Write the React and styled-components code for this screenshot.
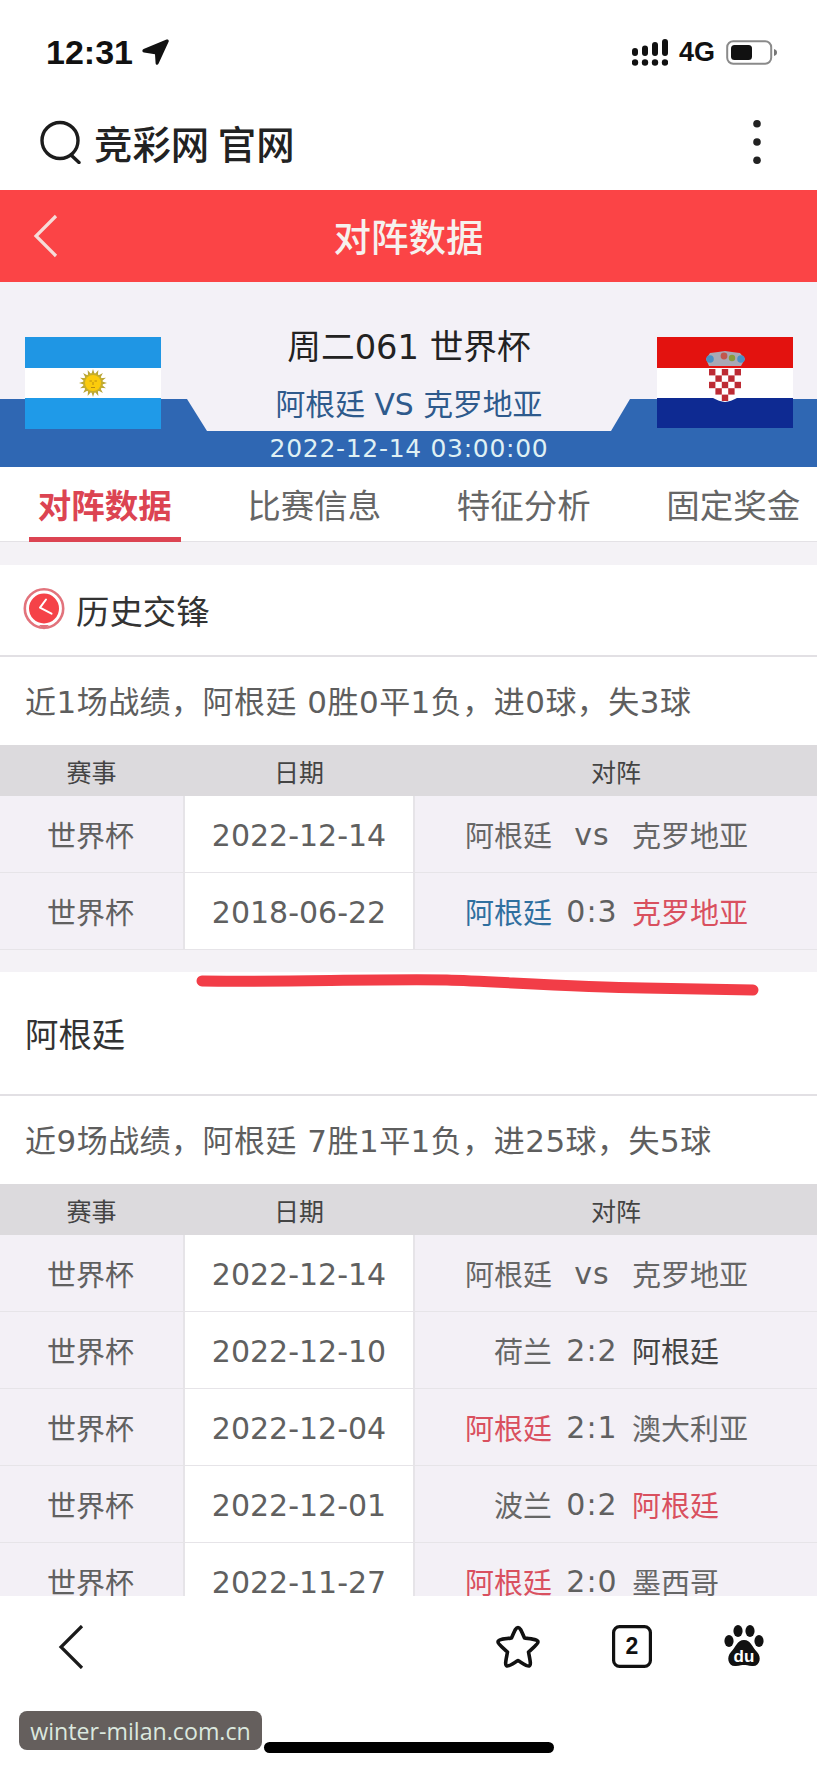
import React from 'react';
import styled, { createGlobalStyle } from 'styled-components';

const GlobalStyle = createGlobalStyle`
  html, body {
    margin: 0;
    padding: 0;
    background: #fff;
  }
  body {
    font-family: "DejaVu Sans", "Noto Sans CJK SC", sans-serif;
  }
`;

const Page = styled.div`
  position: relative;
  width: 817px;
  height: 1768px;
  overflow: hidden;
  display: flex;
  flex-direction: column;
  background: #f4f2f6;
`;

const StatusBar = styled.div`
  height: 104px;
  flex: none;
  box-sizing: border-box;
  padding: 0 39px 0 46px;
  background: #fff;
  display: flex;
  align-items: center;
  justify-content: space-between;
`;

const StatusLeft = styled.div`
  display: flex;
  align-items: center;
  gap: 9px;
`;

const Clock = styled.span`
  font-family: "Liberation Sans", sans-serif;
  font-weight: 700;
  font-size: 34px;
  color: #111;
`;

const StatusRight = styled.div`
  display: flex;
  align-items: center;
  gap: 11px;
`;

const Network = styled.span`
  font-family: "Liberation Sans", sans-serif;
  font-weight: 700;
  font-size: 27px;
  color: #111;
`;

const SearchBar = styled.div`
  height: 86px;
  flex: none;
  box-sizing: border-box;
  padding: 0 56px 11px 40px;
  background: #fff;
  display: flex;
  align-items: center;
  gap: 12px;
`;

const SearchText = styled.div`
  flex: 1;
  font-family: "Noto Sans CJK SC", sans-serif;
  font-size: 38.4px;
  font-weight: 500;
  color: #222;
`;

const TitleBar = styled.div`
  position: relative;
  height: 92px;
  flex: none;
  box-sizing: border-box;
  padding-bottom: 3px;
  background: #fb4446;
  display: flex;
  align-items: center;
  justify-content: center;
  font-family: "Noto Sans CJK SC", sans-serif;
  font-size: 37.5px;
  font-weight: 500;
  color: #f6f1ee;
`;

const TitleBack = styled.div`
  position: absolute;
  left: 32px;
  top: 24px;
  line-height: 0;
`;

const MatchHeader = styled.div`
  position: relative;
  height: 185px;
  flex: none;
  box-sizing: border-box;
  padding: 55px 24px 0 25px;
  background: #f3f1f7;
  display: flex;
  justify-content: space-between;
  align-items: flex-start;

  &::before {
    content: '';
    position: absolute;
    inset: 0;
    background: #2f67b3;
    clip-path: polygon(0 117px, 187px 117px, 207px 149px, 611px 149px, 630px 117px, 817px 117px, 817px 185px, 0 185px);
  }
`;

const Flag = styled.svg`
  position: relative;
  display: block;
  flex: none;
`;

const MatchInfo = styled.div`
  position: relative;
  display: flex;
  flex-direction: column;
  align-items: center;
  margin-top: -11px;
`;

const MatchRound = styled.div`
  font-size: 33.7px;
  line-height: 44px;
  color: #222;
  white-space: nowrap;
`;

const MatchTeams = styled.div`
  margin-top: 15px;
  font-size: 29.8px;
  line-height: 40px;
  color: #2e5a8c;
  white-space: nowrap;
`;

const MatchTime = styled.div`
  margin-top: 7px;
  font-size: 25px;
  line-height: 34px;
  letter-spacing: 0.7px;
  color: #dff0f4;
  white-space: nowrap;
`;

const Tabs = styled.div`
  height: 75px;
  flex: none;
  display: flex;
  background: #fff;
  border-bottom: 1px solid #e4e2e6;
  box-sizing: border-box;
`;

const Tab = styled.div`
  position: relative;
  flex: 0 0 209.5px;
  display: flex;
  justify-content: center;
  align-items: center;
  padding-bottom: 2px;
  box-sizing: border-box;
  font-family: "Noto Sans CJK SC", sans-serif;
  font-size: 33.5px;
  font-weight: ${(p) => (p.$active ? 700 : 400)};
  color: ${(p) => (p.$active ? '#dc4452' : '#666')};

  &::after {
    content: '';
    display: ${(p) => (p.$active ? 'block' : 'none')};
    position: absolute;
    left: 29px;
    right: 29px;
    bottom: -1px;
    height: 5px;
    background: #dc4452;
  }
`;

const Section = styled.div`
  flex: none;
  margin-top: ${(p) => p.$gap}px;
  background: #fff;
`;

const SectionTitle = styled.div`
  height: ${(p) => p.$height}px;
  box-sizing: border-box;
  padding-left: ${(p) => (p.$icon ? 23 : 25)}px;
  padding-bottom: 2px;
  display: flex;
  align-items: center;
  gap: 11px;
  font-family: "Noto Sans CJK SC", sans-serif;
  font-size: 33.4px;
  color: #333;
  border-bottom: 2px solid #e2e0e4;
`;

const Summary = styled.div`
  height: ${(p) => p.$height}px;
  box-sizing: border-box;
  padding: 0 0 3px 25px;
  display: flex;
  align-items: center;
  font-size: 31px;
  letter-spacing: 0.47px;
  color: #5e5e5e;
  white-space: nowrap;
`;

const TableHead = styled.div`
  height: 51px;
  display: grid;
  grid-template-columns: 183px 232px 1fr;
  align-items: center;
  background: #dcdadd;
  font-family: "Noto Sans CJK SC", sans-serif;
  font-size: 25px;
  color: #444;
  text-align: center;
`;

const Row = styled.div`
  height: 77px;
  display: grid;
  grid-template-columns: 183px 232px 1fr;
  background: #f3f0f6;
  color: #606060;
  font-size: 29px;
`;

const CellEvent = styled.div`
  display: flex;
  align-items: center;
  justify-content: center;
  padding-right: 2px;
  font-family: "Noto Sans CJK SC", sans-serif;
  border-bottom: 1px solid #e6e4e8;
`;

const CellDate = styled.div`
  display: flex;
  align-items: center;
  justify-content: center;
  padding-top: 2px;
  background: #fff;
  border-left: 2px solid #e6e4e8;
  border-right: 2px solid #e6e4e8;
  border-bottom: 1px solid #e6e4e8;
  font-size: 30px;
`;

const CellMatch = styled.div`
  display: grid;
  grid-template-columns: 137px 80px 1fr;
  align-items: center;
  border-bottom: 1px solid #e6e4e8;
`;

const Team = styled.span`
  font-family: "Noto Sans CJK SC", sans-serif;
  text-align: ${(p) => p.$align};
  color: ${(p) => ({ red: '#d9505f', blue: '#2f6f9f', dark: '#444' }[p.$tone] || '#666')};
`;

const Score = styled.span`
  text-align: center;
  font-size: 30px;
  letter-spacing: 1px;
`;

const RedStroke = styled.svg`
  position: absolute;
  left: 190px;
  top: 970px;
`;

const BottomBar = styled.div`
  position: absolute;
  left: 0;
  right: 0;
  bottom: 0;
  height: 172px;
  box-sizing: border-box;
  background: #fff;
  padding: 29px 53px 0 58px;
  display: flex;
  flex-direction: column;
`;

const BottomIcons = styled.div`
  display: flex;
  align-items: flex-start;
  justify-content: space-between;
`;

const BottomRight = styled.div`
  display: flex;
  gap: 72px;
`;

const HomeIndicator = styled.div`
  margin: 73px auto 0 206px;
  width: 290px;
  height: 11px;
  border-radius: 6px;
  background: #000;
`;

const Watermark = styled.div`
  position: absolute;
  left: 19px;
  top: 1711px;
  width: 243px;
  height: 39px;
  border-radius: 8px;
  background: #655f5d;
  color: #dbe8df;
  font-family: "Open Sans", sans-serif;
  font-size: 23.2px;
  line-height: 41px;
  text-align: center;
  white-space: nowrap;
`;

const headToHead = [
  { date: '2022-12-14', home: '阿根廷', score: 'vs', away: '克罗地亚' },
  { date: '2018-06-22', home: '阿根廷', homeTone: 'blue', score: '0:3', away: '克罗地亚', awayTone: 'red' },
];

const recent = [
  { date: '2022-12-14', home: '阿根廷', score: 'vs', away: '克罗地亚' },
  { date: '2022-12-10', home: '荷兰', score: '2:2', away: '阿根廷', awayTone: 'dark' },
  { date: '2022-12-04', home: '阿根廷', homeTone: 'red', score: '2:1', away: '澳大利亚' },
  { date: '2022-12-01', home: '波兰', score: '0:2', away: '阿根廷', awayTone: 'red' },
  { date: '2022-11-27', home: '阿根廷', homeTone: 'red', score: '2:0', away: '墨西哥' },
];

const ResultsTable = ({ rows }) => (
  <>
    <TableHead>
      <span>赛事</span>
      <span>日期</span>
      <span>对阵</span>
    </TableHead>
    {rows.map((row) => (
      <Row key={row.date}>
        <CellEvent>世界杯</CellEvent>
        <CellDate>{row.date}</CellDate>
        <CellMatch>
          <Team $align="right" $tone={row.homeTone}>{row.home}</Team>
          <Score>{row.score}</Score>
          <Team $align="left" $tone={row.awayTone}>{row.away}</Team>
        </CellMatch>
      </Row>
    ))}
  </>
);

const SignalIcon = () => (
  <svg width="36" height="27" viewBox="0 0 36 27" fill="#111">
    {[0, 1, 2, 3].map((i) => (
      <circle key={i} cx={3 + i * 10} cy="23.5" r="3.2" />
    ))}
    <rect x="0" y="9" width="6" height="8" rx="3" />
    <rect x="10" y="6.5" width="6" height="10.5" rx="3" />
    <rect x="20" y="3" width="6" height="14" rx="3" />
    <rect x="30" y="0" width="6" height="17" rx="3" />
  </svg>
);

const BatteryIcon = () => (
  <svg width="52" height="25" viewBox="0 0 52 25">
    <rect x="1.2" y="1.2" width="44" height="22.6" rx="6" fill="none" stroke="#8a8a8a" strokeWidth="2" />
    <rect x="5" y="5" width="21" height="15" rx="3.5" fill="#111" />
    <path d="M48 9 C50.5 10 51 11 51 12.5 C51 14 50.5 15 48 16 Z" fill="#777" />
  </svg>
);

const sunRays = Array.from({ length: 16 }, (_, i) => i * 22.5);

const ArgentinaFlag = () => (
  <Flag width="136" height="92" viewBox="0 0 136 92">
    <rect width="136" height="31" fill="#1f96e4" />
    <rect y="31" width="136" height="30" fill="#fff" />
    <rect y="61" width="136" height="31" fill="#1f9ae8" />
    {sunRays.map((deg) => (
      <path key={deg} d="M68 32 L70.5 40 H65.5 Z" fill="#b8a436" transform={`rotate(${deg} 68 46)`} />
    ))}
    <circle cx="68" cy="46" r="10" fill="#c6ad2a" />
    <circle cx="68" cy="46" r="8" fill="#fbcb0c" />
    <path d="M64.5 44h2.4M69.5 44h2.4M68 45v3M66 50.5h4" stroke="#b98c10" strokeWidth="1" />
  </Flag>
);

const checker = [
  [0, 0], [2, 0], [4, 0],
  [1, 1], [3, 1],
  [0, 2], [2, 2], [4, 2],
  [1, 3], [3, 3],
  [2, 4],
];

const CroatiaFlag = () => (
  <Flag width="136" height="91" viewBox="0 0 136 91">
    <rect width="136" height="31" fill="#e3120f" />
    <rect y="31" width="136" height="30" fill="#fff" />
    <rect y="61" width="136" height="30" fill="#0e2a92" />
    <path d="M49 22 L53 16 L61 15 L68 14 L75 15 L83 16 L88 22 L84 29 H52 Z" fill="#a8a9b5" />
    <circle cx="53" cy="22" r="3.8" fill="#4a8fc4" />
    <circle cx="67" cy="19" r="3.4" fill="#c2574d" />
    <circle cx="75" cy="21" r="3.2" fill="#8a9a3a" />
    <circle cx="84" cy="22" r="3.8" fill="#4a8fc4" />
    <path d="M51 31 H85 V52 C85 60 76 64 68 65 C60 64 51 60 51 52 Z" fill="#fff" />
    {checker.map(([cx, cy]) => (
      <rect key={`${cx}-${cy}`} x={52 + cx * 6.4} y={32 + cy * 6.4} width="6.4" height="6.4" fill="#bd2b34" />
    ))}
  </Flag>
);

const ClockIcon = () => (
  <svg width="42" height="42" viewBox="0 0 42 42">
    <circle cx="21" cy="20.5" r="19.2" fill="none" stroke="#e2737c" strokeWidth="2.6" />
    <circle cx="21" cy="20.5" r="15" fill="#f54248" />
    <path d="M16 37 H26 L21 41.5 Z" fill="#e2737c" />
    <path d="M23 11.5 L17 19.7 L28.5 25.7" fill="none" stroke="#fff" strokeWidth="2" strokeLinecap="round" strokeLinejoin="round" />
  </svg>
);

const App = () => (
  <Page>
    <GlobalStyle />
    <StatusBar>
      <StatusLeft>
        <Clock>12:31</Clock>
        <svg width="27" height="26" viewBox="0 0 27 26" fill="#111">
          <path d="M24.5 0.6 C26 0 27.3 1.2 26.6 2.8 L16.6 24.6 C15.8 26.4 13.8 26.2 13.6 24.2 L13 15.2 L2 13.6 C0 13.1 -0.2 10.8 1.6 9.9 Z" />
        </svg>
      </StatusLeft>
      <StatusRight>
        <SignalIcon />
        <Network>4G</Network>
        <BatteryIcon />
      </StatusRight>
    </StatusBar>

    <SearchBar>
      <svg width="42" height="44" viewBox="0 0 42 44" fill="none" stroke="#1c1c1c" strokeWidth="3.4">
        <circle cx="20" cy="20.5" r="18" />
        <path d="M31 35 L39 42.5" strokeLinecap="round" />
      </svg>
      <SearchText>竞彩网 官网</SearchText>
      <svg width="8" height="44" viewBox="0 0 8 44" fill="#222">
        <circle cx="4" cy="3.8" r="3.8" />
        <circle cx="4" cy="22" r="3.8" />
        <circle cx="4" cy="40.2" r="3.8" />
      </svg>
    </SearchBar>

    <TitleBar>
      <TitleBack>
        <svg width="28" height="44" viewBox="0 0 28 44" fill="none" stroke="#f6dcd8" strokeWidth="3.2">
          <path d="M24 2 L4 22 L24 42" />
        </svg>
      </TitleBack>
      对阵数据
    </TitleBar>

    <MatchHeader>
      <ArgentinaFlag />
      <MatchInfo>
        <MatchRound>周二061 世界杯</MatchRound>
        <MatchTeams>阿根廷 VS 克罗地亚</MatchTeams>
        <MatchTime>2022-12-14 03:00:00</MatchTime>
      </MatchInfo>
      <CroatiaFlag />
    </MatchHeader>

    <Tabs>
      <Tab $active>对阵数据</Tab>
      <Tab>比赛信息</Tab>
      <Tab>特征分析</Tab>
      <Tab>固定奖金</Tab>
    </Tabs>

    <Section $gap={23}>
      <SectionTitle $height={92} $icon>
        <ClockIcon />
        历史交锋
      </SectionTitle>
      <Summary $height={88}>近1场战绩，阿根廷 0胜0平1负，进0球，失3球</Summary>
      <ResultsTable rows={headToHead} />
    </Section>

    <Section $gap={22}>
      <SectionTitle $height={124}>阿根廷</SectionTitle>
      <Summary $height={88}>近9场战绩，阿根廷 7胜1平1负，进25球，失5球</Summary>
      <ResultsTable rows={recent} />
    </Section>

    <RedStroke width="580" height="32" viewBox="0 0 580 32" fill="none">
      <path d="M12 11 C100 12 180 9 257 10 C300 11 380 17 454 18 L563 20" stroke="#f23d47" strokeWidth="11" strokeLinecap="round" />
    </RedStroke>

    <BottomBar>
      <BottomIcons>
        <svg width="26" height="44" viewBox="0 0 26 44" fill="none" stroke="#1a1a1a" strokeWidth="3.2">
          <path d="M24 1 L3 22 L24 43" />
        </svg>
        <BottomRight>
          <svg width="44" height="43" viewBox="0 0 44 43" fill="none" stroke="#111" strokeWidth="3.6" strokeLinejoin="round">
            <path d="M22 2.5 C24 2.5 25 5 28.5 13 C37 14 42 14.5 42 17 C42 19 38 22 32.5 27 C34 35 35.5 40 33 41 C31 41.5 27 38.5 22 35.5 C17 38.5 13 41.5 11 41 C8.5 40 10 35 11.5 27 C6 22 2 19 2 17 C2 14.5 7 14 15.5 13 C19 5 20 2.5 22 2.5 Z" />
          </svg>
          <svg width="40" height="43" viewBox="0 0 40 43">
            <rect x="1.6" y="1.6" width="36.8" height="39.8" rx="6" fill="none" stroke="#111" strokeWidth="3.2" />
            <text x="20" y="29" textAnchor="middle" fontFamily="Liberation Sans" fontWeight="700" fontSize="23" fill="#111">2</text>
          </svg>
          <svg width="40" height="42" viewBox="0 0 40 42" fill="#111">
            <ellipse cx="5" cy="16" rx="4.6" ry="6" />
            <ellipse cx="14" cy="6" rx="4.6" ry="6" />
            <ellipse cx="26" cy="6" rx="4.6" ry="6" />
            <ellipse cx="35" cy="16" rx="4.6" ry="6" />
            <path d="M20 15 C27 15 28 22 33 27 C38 32 36 42 28 41 C24 40.5 22 40 20 40 C18 40 16 40.5 12 41 C4 42 2 32 7 27 C12 22 13 15 20 15 Z" />
            <text x="20" y="37" textAnchor="middle" fontFamily="Liberation Sans" fontWeight="700" fontSize="17" fill="#fff">du</text>
          </svg>
        </BottomRight>
      </BottomIcons>
      <HomeIndicator />
    </BottomBar>

    <Watermark>winter-milan.com.cn</Watermark>
  </Page>
);

export default App;
